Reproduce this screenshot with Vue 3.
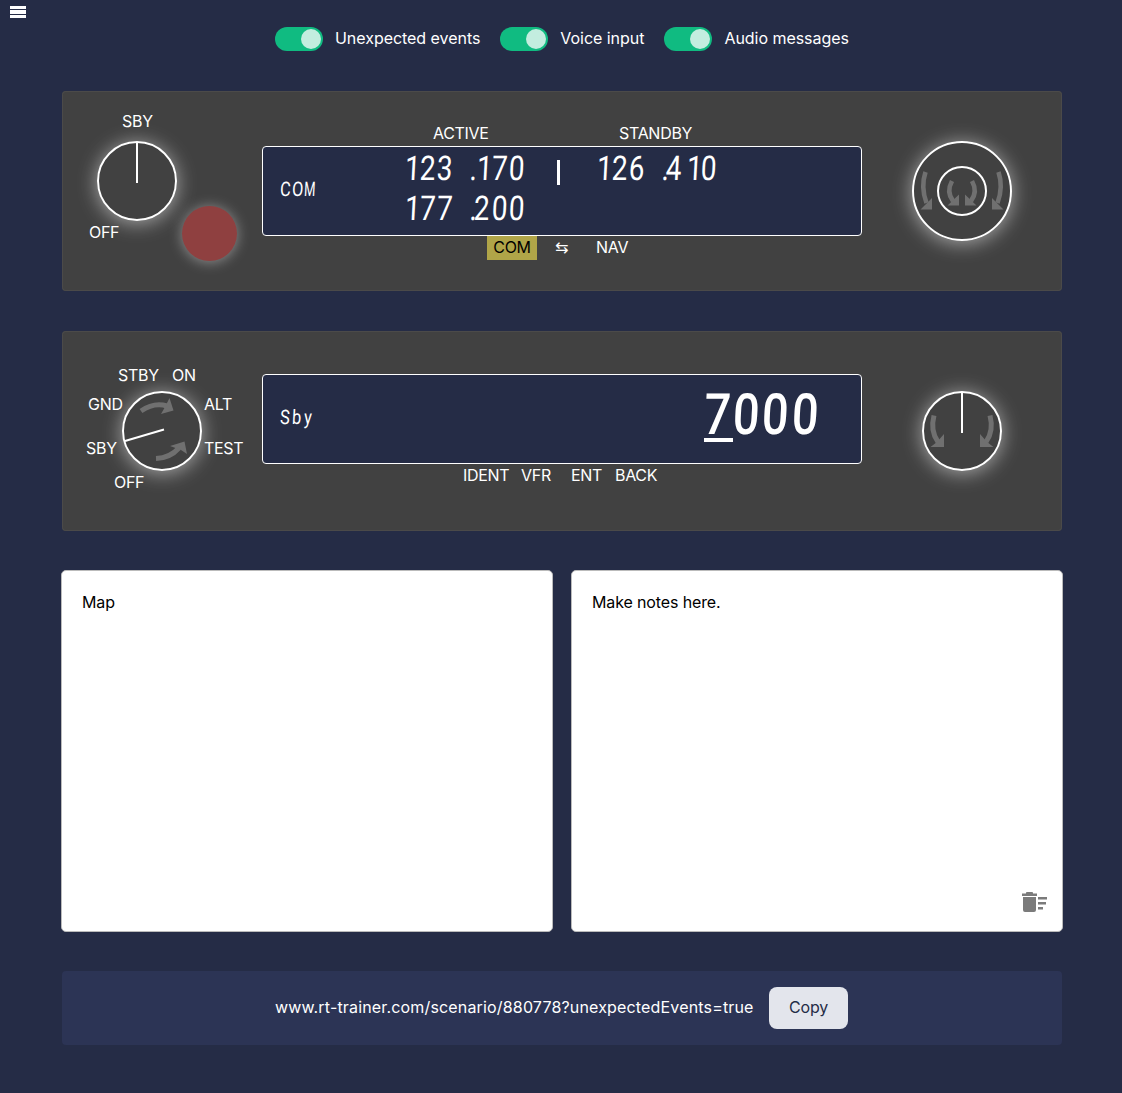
<script setup>
import { ref } from 'vue'

const toggles = ref([
  { label: 'Unexpected events', on: true },
  { label: 'Voice input', on: true },
  { label: 'Audio messages', on: true }
])
const modes = [
  { label: 'STBY', x: 56, y: 32 },
  { label: 'ON', x: 110, y: 32 },
  { label: 'GND', x: 26, y: 61 },
  { label: 'ALT', x: 142, y: 61 },
  { label: 'SBY', x: 24, y: 105 },
  { label: 'TEST', x: 142, y: 105 },
  { label: 'OFF', x: 52, y: 139 }
]
const active = '123 .170'
const secondary = '177 .200'
const standby = '126 .410'
</script>

<template>
  <main class="page">
    <button class="menu" aria-label="Menu"><i></i><i></i><i></i></button>

    <div class="toggles">
      <label v-for="t in toggles" :key="t.label" class="toggle">
        <span class="track"><span class="thumb"></span></span>
        <span class="toggle-text">{{ t.label }}</span>
      </label>
    </div>

    <section class="panel">
      <div class="side">
        <span class="mark sby">SBY</span>
        <div class="dial power"><i class="needle"></i></div>
        <span class="mark off">OFF</span>
        <div class="transmit"></div>
      </div>
      <div class="middle radio">
        <div class="heads"><span class="h-active">ACTIVE</span><span class="h-standby">STANDBY</span></div>
        <div class="screen">
          <div class="seg mode"><span v-for="(c, i) in 'COM'" :key="i" class="cell" :class="{ wide: c === 'M' }"><b>{{ c }}</b></span></div>
          <div class="freqs">
            <div class="seg freq"><span v-for="(c, i) in active" :key="i" class="cell" :class="{ dot: c === '.', one: c === '1' }"><b>{{ c }}</b></span></div>
            <div class="seg freq"><span v-for="(c, i) in secondary" :key="i" class="cell" :class="{ dot: c === '.', one: c === '1' }"><b>{{ c }}</b></span></div>
          </div>
          <div class="bar"></div>
          <div class="freqs stand">
            <div class="seg freq"><span v-for="(c, i) in standby" :key="i" class="cell" :class="{ dot: c === '.', one: c === '1' }"><b>{{ c }}</b></span></div>
          </div>
        </div>
        <div class="keys"><span class="key com">COM</span><span class="key swap">⇆</span><span class="key nav">NAV</span></div>
      </div>
      <div class="side right">
        <div class="dial tuner">
          <svg viewBox="0 0 100 100" width="100" height="100">
            <circle cx="50" cy="50" r="24" fill="none" stroke="#fff" stroke-width="2" />
            <g stroke="#707070" stroke-width="4.6" fill="none">
              <path d="M13.500 31Q8.500 46 14.500 62M86.500 31Q91.500 46 85.500 62M40 40Q34 51 41 60M60 40Q66 51 59 60" />
            </g>
            <path fill="#707070" d="M20 57V68.500H8.500ZM80 57V68.500H91.500ZM47 53.500V64.500H35.500ZM53 53.500V64.500H64.500Z" />
          </svg>
        </div>
      </div>
    </section>

    <section class="panel second">
      <div class="side">
        <span v-for="m in modes" :key="m.label" class="mark" :style="{ left: m.x + 'px', top: m.y + 'px' }">{{ m.label }}</span>
        <div class="dial selector">
          <svg viewBox="0 0 80 80" width="80" height="80">
            <path d="M3 50L42 38.500" stroke="#fff" stroke-width="2" />
            <path d="M19 20Q32 11 45 15M34 67.500Q48 67 57 57" stroke="#707070" stroke-width="5" fill="none" />
            <path fill="#707070" d="M47.500 7L51.500 19.500L39 23L43 16ZM48 55L62.500 50.500L65 63L59 59Z" />
          </svg>
        </div>
      </div>
      <div class="middle transponder">
        <div class="screen">
          <div class="seg mode"><span v-for="(c, i) in 'Sby'" :key="i" class="cell"><b>{{ c }}</b></span></div>
          <div class="seg code"><span v-for="(c, i) in '7000'" :key="i" class="cell" :class="{ selected: i === 0 }"><b>{{ c }}</b></span></div>
        </div>
        <div class="keys"><span class="key ident">IDENT</span><span class="key vfr">VFR</span><span class="key ent">ENT</span><span class="key back">BACK</span></div>
      </div>
      <div class="side right">
        <div class="dial power">
          <i class="needle"></i>
          <svg viewBox="0 0 80 80" width="80" height="80">
            <path d="M12 24.500Q8 40 16 51M68 24.500Q72 40 64 51" stroke="#707070" stroke-width="5" fill="none" />
            <path fill="#707070" d="M22 43V56H8.500L15 51ZM58 43V56H71.500L65 51Z" />
          </svg>
        </div>
      </div>
    </section>

    <div class="cards">
      <div class="card map">Map</div>
      <div class="card notes">
        <span>Make notes here.</span>
        <svg class="trash" viewBox="0 0 26 21" width="26" height="21" fill="#7b7b7b">
          <path d="M0 1.500H4V.8Q4 0 5 0H10Q11 0 11 .8V1.500H15V4H0ZM1 5H14V18Q14 20 12 20H3Q1 20 1 18ZM16 5H25V7.500H16ZM16 10H24V12.500H16ZM16 15H21V17.500H16Z" />
        </svg>
      </div>
    </div>

    <footer class="share">
      <span class="url">www.rt-trainer.com/scenario/880778?unexpectedEvents=true</span>
      <button class="copy">Copy</button>
    </footer>
  </main>
</template>

<style>
body { margin: 0; background: #252c46; }
</style>

<style scoped>
* { box-sizing: border-box; }
.page {
  position: relative;
  height: 1093px;
  padding: 27px 60px 0 62px;
  background: #252c46;
  color: #fff;
  font: 16px/24px Inter, "Liberation Sans", sans-serif;
}
.menu {
  position: absolute;
  left: 10px;
  top: 6px;
  display: flex;
  flex-direction: column;
  gap: 1px;
  width: 16px;
  padding: 0;
  border: 0;
  background: none;
}
.menu i { height: 3px; background: #fff; }
.menu i:nth-child(2) { height: 4px; }
.toggles { display: flex; gap: 20px; height: 24px; margin-left: 213px; }
.toggle { display: flex; gap: 12px; white-space: nowrap; letter-spacing: -.04px; line-height: 23px; }
.track { display: flex; justify-content: flex-end; width: 48px; height: 24px; padding: 2px; border-radius: 12px; background: #10bb81; }
.thumb { width: 20px; height: 20px; border-radius: 50%; background: #c3eddf; }
.panel {
  display: flex;
  width: 1000px;
  height: 200px;
  margin-top: 40px;
  border-radius: 4px;
  background: #414141;
  box-shadow: inset 0 0 0 1px #4b4a49;
  letter-spacing: -.3px;
}
.side { position: relative; flex: 0 0 200px; }
.middle { width: 600px; }
.mark { position: absolute; line-height: 24px; }
.mark.sby { left: 60px; top: 18px; }
.mark.off { left: 27px; top: 129px; }
.dial { position: relative; border: 2px solid #fff; border-radius: 50%; box-shadow: 0 2px 20px rgba(255, 255, 255, .55); }
.dial svg { display: block; margin: -2px; }
.power { width: 80px; height: 80px; margin: 50px 0 0 35px; }
.tuner { width: 100px; height: 100px; margin: 50px 0 0 50px; }
.right .power { margin: 60px 0 0 60px; }
.selector { width: 80px; height: 80px; margin: 60px 0 0 60px; }
.needle { position: absolute; left: 37px; top: 0; width: 2px; height: 40px; background: #fff; }
.transmit { width: 55px; height: 55px; margin: -15px 0 0 120px; border-radius: 50%; background: #8f4040; box-shadow: 0 1px 14px rgba(255, 255, 255, .42); }
.radio { padding-top: 31px; }
.heads { display: flex; height: 24px; line-height: 23px; }
.h-active { width: 186px; margin-left: 171px; }
.screen { display: flex; height: 90px; border: 1px solid #fff; border-radius: 4px; background: #252c46; }
.seg { display: flex; font-family: Roboto, sans-serif; font-weight: 400; letter-spacing: 0; }
.cell { display: block; flex-shrink: 0; white-space: pre; }
.cell b { display: inline-block; font-weight: inherit; transform: skewX(-3deg) scaleX(.82); transform-origin: left; }
.mode { width: 121px; margin: 32px 0 0 17px; font-size: 20px; line-height: 20px; }
.mode .cell { width: 12px; }
.mode .wide b { transform: skewX(-3deg) scaleX(.65); }
.freqs { width: 156px; padding-top: 1px; }
.freq { height: 40px; font-size: 34px; line-height: 40px; }
.freq .cell { width: 17.500px; }
.freq .cell b { margin-left: 1px; }
.freq .dot { width: 2px; }
.freq .dot b { margin-left: -1px; }
.freq .one b { margin-left: 4px; }
.bar { width: 3px; height: 25px; margin: 13px 33px 0 0; background: #fff; }
.keys { display: flex; height: 24px; line-height: 23px; }
.com { width: 50px; margin-left: 225px; text-align: center; background: #b0a548; color: #000; }
.swap { width: 41px; margin-left: 18px; font-family: "DejaVu Sans", sans-serif; }
.transponder { padding-top: 43px; }
.code { margin: 16px 0 0 303px; height: 51px; font-size: 57px; line-height: 48px; font-weight: 500; }
.code .cell { width: 29.200px; }
.code .cell b { height: 50px; }
.code .selected { border-bottom: 4px solid #fff; }
.ident { width: 58px; margin-left: 201px; }
.vfr { width: 50px; }
.ent { width: 44px; }
.cards { display: flex; gap: 18px; width: 1002px; margin: 39px 0 0 -1px; }
.card { width: 492px; height: 362px; padding: 19px 20px 21px; border: 1px solid #bbb; border-radius: 5px; background: #fff; color: #000; letter-spacing: -.13px; }
.notes { display: flex; flex-direction: column; justify-content: space-between; }
.trash { align-self: flex-end; margin: 0 -6px -3px 0; }
.share { display: flex; align-items: center; width: 1000px; height: 74px; margin-top: 39px; padding-left: 213px; border-radius: 4px; background: #2c3455; }
.url { width: 494px; padding-bottom: 2px; white-space: nowrap; letter-spacing: .165px; }
.copy { width: 79px; height: 42px; padding: 0 0 2px; border: 0; border-radius: 8px; background: #e3e5ec; color: #252c46; font: inherit; letter-spacing: -.2px; }
</style>
